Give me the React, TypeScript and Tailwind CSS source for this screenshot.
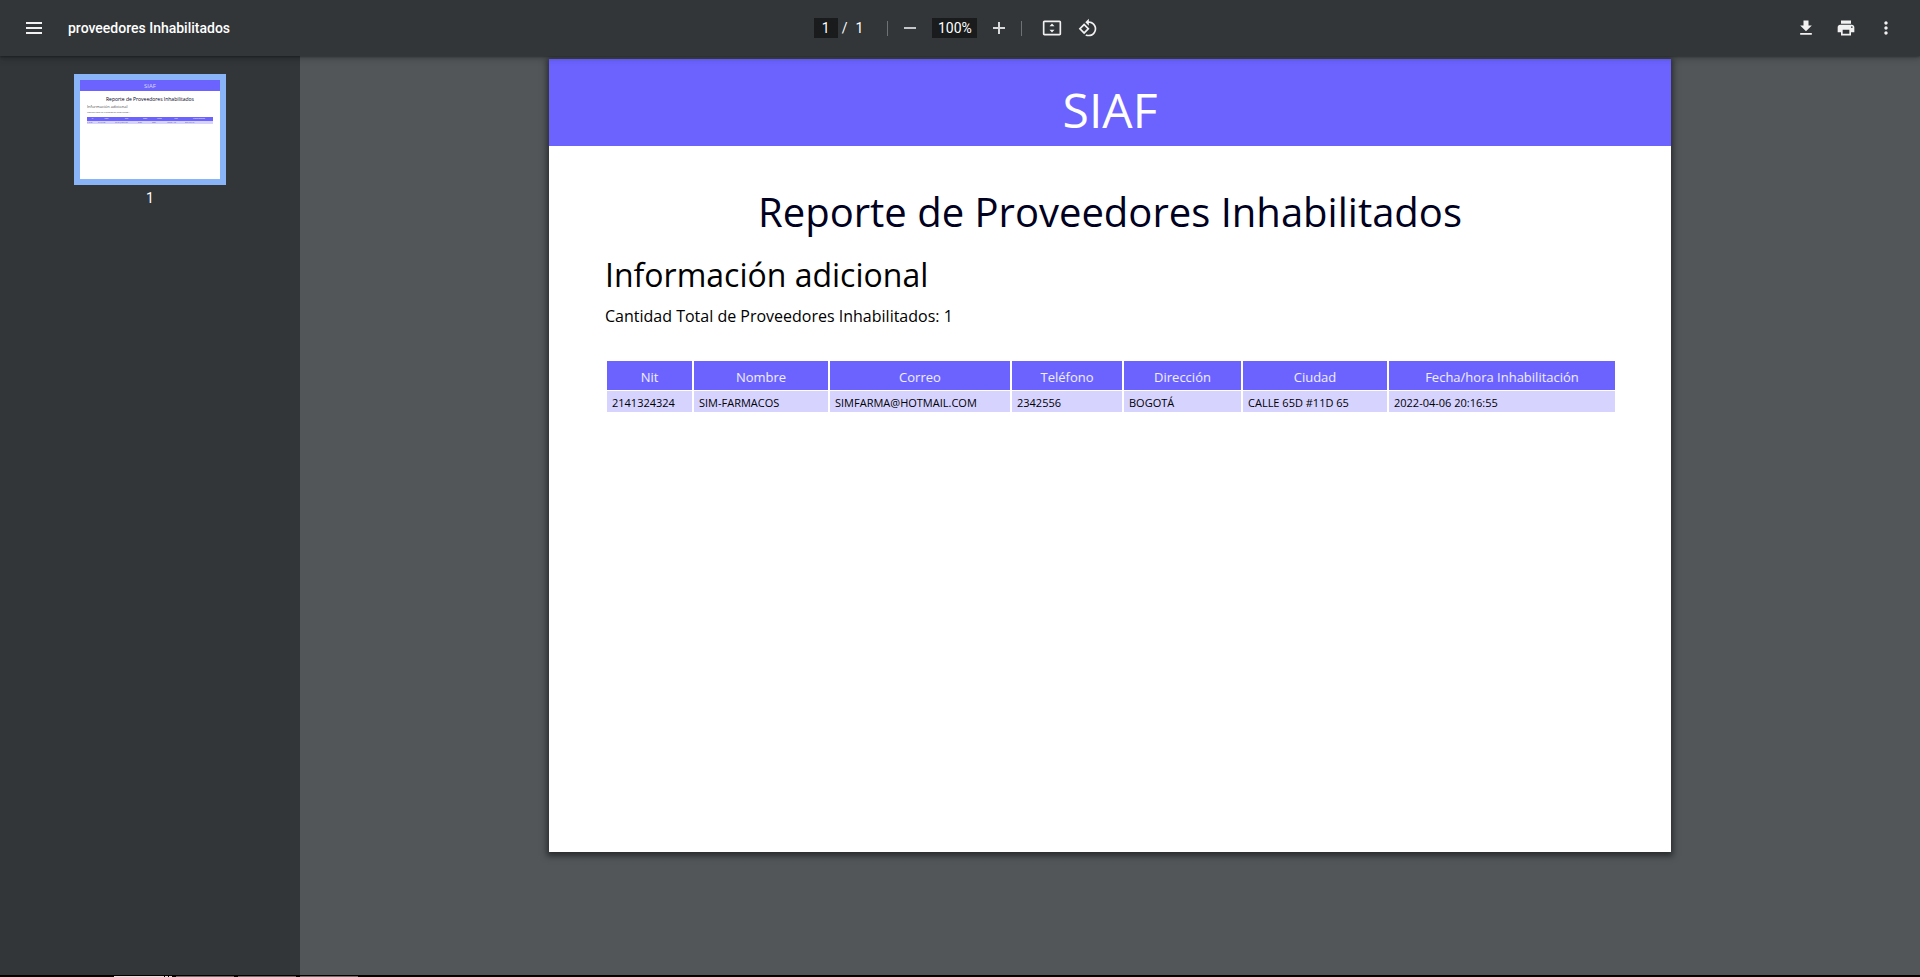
import type { ReactNode } from "react";

const columns = [
  { label: "Nit", value: "2141324324", width: "w-[85px]", thumb: "w-[11px]" },
  { label: "Nombre", value: "SIM-FARMACOS", width: "w-[134px]", thumb: "w-[17px]" },
  { label: "Correo", value: "SIMFARMA@HOTMAIL.COM", width: "w-[180px]", thumb: "w-[23px]" },
  { label: "Teléfono", value: "2342556", width: "w-[110px]", thumb: "w-[14px]" },
  { label: "Dirección", value: "BOGOTÁ", width: "w-[117px]", thumb: "w-[15px]" },
  { label: "Ciudad", value: "CALLE 65D #11D 65", width: "w-[144px]", thumb: "w-[18px]" },
  { label: "Fecha/hora Inhabilitación", value: "2022-04-06 20:16:55", width: "w-[226px]", thumb: "w-[28px]" },
];

function IconButton({ label, children }: { label: string; children: ReactNode }) {
  return (
    <button type="button" aria-label={label} className="flex size-8 items-center justify-center rounded-full">
      {children}
    </button>
  );
}

function Icon({ d }: { d: string }) {
  return (
    <svg viewBox="0 0 24 24" className="size-5 fill-[#f1f1f1]" aria-hidden="true">
      <path d={d} />
    </svg>
  );
}

function Toolbar() {
  return (
    <header className="relative z-10 grid h-14 shrink-0 grid-cols-[1fr_auto_1fr] items-center bg-[#323639] px-[18px] text-sm text-white shadow-[0_-2px_8px_rgba(0,0,0,0.09),0_4px_8px_rgba(0,0,0,0.06),0_1px_2px_rgba(0,0,0,0.3),0_2px_6px_rgba(0,0,0,0.15)]">
      <div className="flex items-center gap-[18px]">
        <IconButton label="Menú">
          <svg viewBox="0 0 16 12" className="h-3 w-4 fill-[#f1f1f1]" aria-hidden="true">
            <path d="M0 0h16v2H0zM0 5h16v2H0zM0 10h16v2H0z" />
          </svg>
        </IconButton>
        <h1 className="font-medium">proveedores Inhabilitados</h1>
      </div>

      <div className="flex items-center pr-[2px]">
        <div className="flex items-center gap-1">
          <input
            aria-label="Número de página"
            defaultValue="1"
            className="h-5 w-6 bg-[#191b1c] text-center outline-none"
          />
          <span>/</span>
          <span className="pl-1">1</span>
        </div>
        <span className="mr-[6px] ml-6 h-[15px] w-px bg-[#6f7274]" />
        <IconButton label="Alejar">
          <svg viewBox="0 0 12 12" className="size-3 fill-[#c4c6c7]" aria-hidden="true">
            <path d="M0 5h12v2H0z" />
          </svg>
        </IconButton>
        <input
          aria-label="Nivel de zoom"
          defaultValue="100%"
          className="mx-[6px] h-5 w-[45px] bg-[#191b1c] text-center outline-none"
        />
        <IconButton label="Acercar">
          <svg viewBox="0 0 12 12" className="size-3 fill-[#d8d9da]" aria-hidden="true">
            <path d="M0 5h5V0h2v5h5v2H7v5H5V7H0z" />
          </svg>
        </IconButton>
        <span className="mx-[6px] h-[15px] w-px bg-[#6f7274]" />
        <div className="flex gap-1 pl-2">
          <IconButton label="Ajustar a la página">
            <Icon d="M21 3H3c-1.1 0-2 .9-2 2v14c0 1.1.9 2 2 2h18c1.1 0 2-.9 2-2V5c0-1.1-.9-2-2-2zm0 16H3V5h18v14zM12 6.5 9 10h6zM12 17.500l3-3.500H9z" />
          </IconButton>
          <IconButton label="Girar hacia la izquierda">
            <Icon d="M7.340 6.410.860 12.900l6.490 6.480 6.490-6.480-6.500-6.490zM3.690 12.900l3.660-3.660L11 12.900l-3.660 3.660-3.650-3.660zm15.670-6.260C17.610 4.880 15.300 4 13 4V.760L8.760 5 13 9.240V6c1.790 0 3.580.680 4.950 2.050 2.730 2.730 2.730 7.170 0 9.900C16.580 19.320 14.790 20 13 20c-.970 0-1.940-.210-2.840-.610l-1.490 1.490C10.020 21.620 11.510 22 13 22c2.300 0 4.610-.880 6.360-2.640 3.520-3.510 3.520-9.210 0-12.720z" />
          </IconButton>
        </div>
      </div>

      <div className="flex justify-end gap-2">
        <IconButton label="Descargar">
          <Icon d="M19 9h-4V3H9v6H5l7 7 7-7zM5 18v2h14v-2H5z" />
        </IconButton>
        <IconButton label="Imprimir">
          <Icon d="M19 8H5c-1.660 0-3 1.340-3 3v6h4v4h12v-4h4v-6c0-1.660-1.340-3-3-3zm-3 11H8v-5h8v5zm3-7c-.550 0-1-.450-1-1s.450-1 1-1 1 .450 1 1-.450 1-1 1zm-1-9H6v4h12V3z" />
        </IconButton>
        <IconButton label="Más acciones">
          <Icon d="M12 8c1.100 0 2-.900 2-2s-.900-2-2-2-2 .900-2 2 .900 2 2 2zm0 2c-1.100 0-2 .900-2 2s.900 2 2 2 2-.900 2-2-.900-2-2-2zm0 6c-1.100 0-2 .900-2 2s.900 2 2 2 2-.900 2-2-.900-2-2-2z" />
        </IconButton>
      </div>
    </header>
  );
}

function Thumbnail() {
  return (
    <button type="button" aria-label="Página 1" className="flex flex-col items-center gap-[3px]">
      <div className="border-[6px] border-[#8ab4f8]">
        <div className="h-[99px] w-[140px] overflow-hidden bg-white text-left font-['Open_Sans',sans-serif] text-black/80">
          <div className="h-[11px] bg-[#6c63ff] pt-px text-center text-[6px] leading-[10px] text-white/75">SIAF</div>
          <div className="px-[7px] pt-[5px]">
            <div className="text-center text-[5px] leading-[7px] text-[#000020]">Reporte de Proveedores Inhabilitados</div>
            <div className="text-[4px] leading-[8px]">Información adicional</div>
            <div className="h-[6px] text-[2px] leading-[3px]">Cantidad Total de Proveedores Inhabilitados: 1</div>
            <div className="flex bg-[#6c63ff] text-center text-[1px] leading-[4px] text-white">
              {columns.map((c) => (
                <span key={c.label} className={c.thumb}>{c.label}</span>
              ))}
            </div>
            <div className="flex bg-[#d6d3ff] text-[1px] leading-[3px]">
              {columns.map((c) => (
                <span key={c.label} className={c.thumb}>{c.value}</span>
              ))}
            </div>
          </div>
        </div>
      </div>
      <span className="text-sm text-white">1</span>
    </button>
  );
}

function Report() {
  return (
    <article className="min-h-[793px] w-full max-w-[1122px] bg-white font-['Open_Sans',sans-serif] text-black shadow-[0_2px_6px_2px_rgba(0,0,0,0.5)]">
      <div className="h-[87px] bg-[#6c63ff] pt-4 text-center text-5xl leading-[70px] text-white">SIAF</div>
      <div className="px-14 pt-10">
        <h2 className="text-center text-[40px] leading-[52px] text-[#000020]">Reporte de Proveedores Inhabilitados</h2>
        <h3 className="mt-4 text-[32px] leading-[42px]">Información adicional</h3>
        <p className="mt-2 text-base leading-6">Cantidad Total de Proveedores Inhabilitados: 1</p>
        <table className="mt-8 w-full table-fixed border-separate border-spacing-x-[2px] border-spacing-y-px">
          <thead>
            <tr className="text-[13px] leading-[18px] text-white/90">
              {columns.map((c) => (
                <th key={c.label} scope="col" className={`${c.width} bg-[#6c63ff] p-0 pt-[7px] pb-1 font-normal`}>
                  {c.label}
                </th>
              ))}
            </tr>
          </thead>
          <tbody>
            <tr className="text-[11px] leading-[15px]">
              {columns.map((c) => (
                <td key={c.label} className="bg-[#d6d3ff] px-[5px] pt-1 pb-[2px] whitespace-nowrap">
                  {c.value}
                </td>
              ))}
            </tr>
          </tbody>
        </table>
      </div>
    </article>
  );
}

export default function App() {
  return (
    <div className="flex h-screen flex-col overflow-hidden bg-[#525659] font-[Roboto,sans-serif]">
      <Toolbar />
      <div className="flex min-h-0 flex-1">
        <aside className="flex w-[300px] shrink-0 flex-col items-center bg-[#323639] pt-[18px]">
          <Thumbnail />
        </aside>
        <main className="flex min-w-0 flex-1 items-start justify-center pt-[3px]">
          <Report />
        </main>
      </div>
      <footer className="flex h-[2px] shrink-0 items-end gap-1 bg-black pl-[114px]">
        <div className="flex gap-px">
          <span className="h-px w-[50px] bg-[#e0e0e0]" />
          <span className="h-px w-[3px] bg-[#e0e0e0]" />
          <span className="h-px w-[3px] bg-[#e0e0e0]" />
        </div>
        <span className="h-px w-[58px] bg-[#707070]" />
        <span className="h-px w-[58px] bg-[#707070]" />
        <span className="h-px w-[58px] bg-[#707070]" />
      </footer>
    </div>
  );
}
